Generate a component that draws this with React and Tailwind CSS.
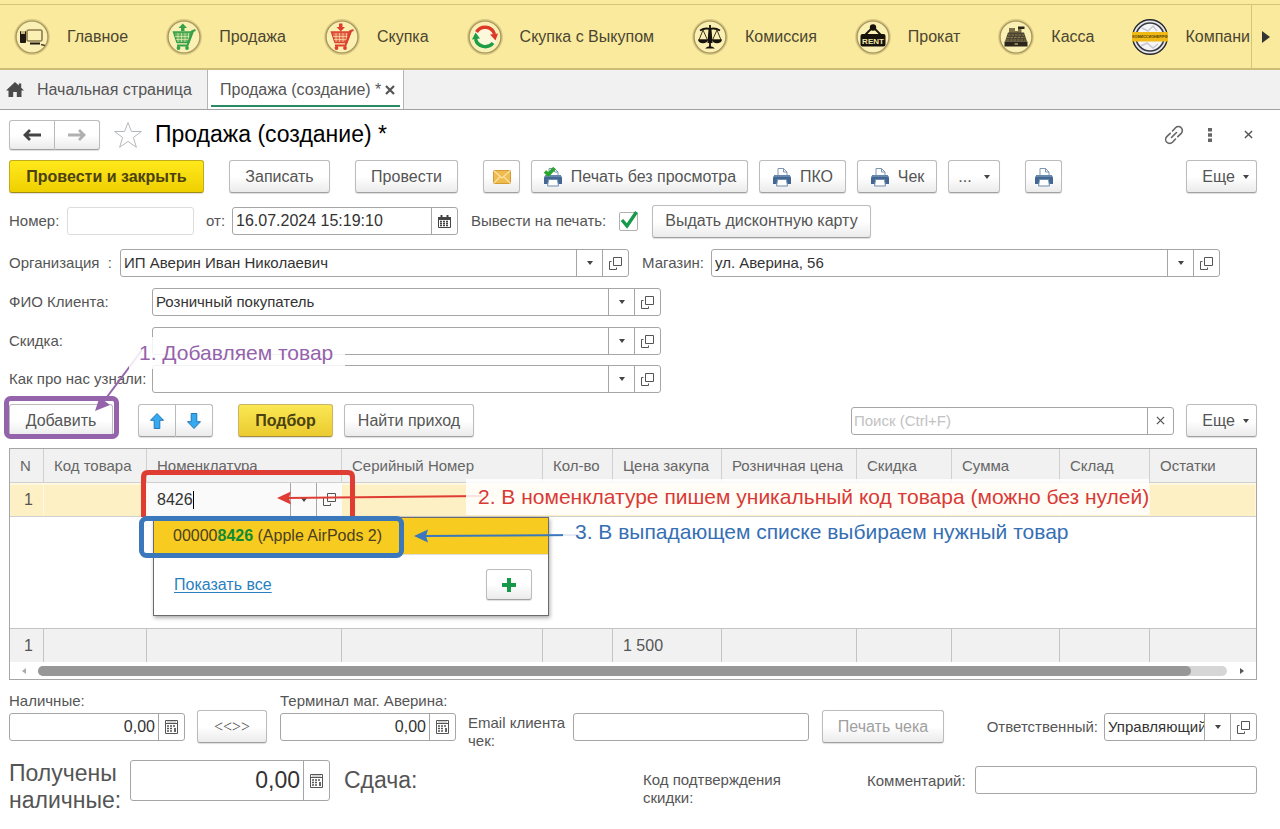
import React, { useState } from "react";

const Ring = ({ children }) => (
	<svg viewBox="0 0 36 36" className="w-9 h-9 shrink-0" aria-hidden="true">
		<circle cx="18" cy="18" r="16.6" fill="#fbf0b4" stroke="#d9cb86" strokeWidth="2.6" />
		<circle cx="18" cy="18" r="16" fill="none" stroke="#a8945a" strokeWidth="1.2" />
		{children}
	</svg>
);

const ComputerIcon = () => (
	<Ring>
		<rect x="6" y="12" width="6" height="12" rx="1" fill="#1f1a12" />
		<rect x="7" y="12" width="4" height="3" fill="#c9b678" />
		<rect x="13" y="11" width="15" height="11" rx="1.5" fill="#fbf0b4" stroke="#8b7c4d" strokeWidth="1.6" />
		<path d="M16 24.5h10" stroke="#1f1a12" strokeWidth="2" />
		<path d="M27 25.5l4 1" stroke="#4a4330" strokeWidth="1.8" />
	</Ring>
);

const CartIcon = ({ color, down }) => (
	<Ring>
		<path d="M7.5 13l3.500 10.500h12l4-10.500z" fill={color} fillOpacity=".75" stroke={color} strokeWidth="1.4" />
		<path d="M12 14v9M15.5 14v9M19 14v9M22.5 14v9M9 17.500h16M10 20.500h14" stroke="#fbf0b4" strokeWidth=".6" />
		<path d="M29.5 11l-3.500 1.200-4.500 14.300H11" fill="none" stroke={color} strokeWidth="2" />
		<circle cx="12.5" cy="29" r="1.900" fill={color} />
		<circle cx="21" cy="29" r="1.900" fill={color} />
		<path
			d={down ? "M15 4.500h3.500v3.500H21l-4.200 4.500-4.300-4.500H15z" : "M15 12h3.500V9H21l-4.200-4.500-4.300 4.500H15z"}
			fill={color}
		/>
	</Ring>
);

const CycleIcon = () => (
	<Ring>
		<circle cx="18" cy="18" r="12" fill="#fdf8dc" />
		<path d="M9.5 13A10 10 0 0 1 27.500 15" fill="none" stroke="#dd3a26" strokeWidth="3.400" />
		<path d="M23 15.500l8-1-2.500 7z" fill="#dd3a26" />
		<path d="M26 24A10 10 0 0 1 8.500 20" fill="none" stroke="#1f9d43" strokeWidth="3.400" />
		<path d="M5 20.500l3.500-7 4.500 6z" fill="#1f9d43" />
	</Ring>
);

const ScalesIcon = () => (
	<Ring>
		<path d="M18 6v22M8 11.500q5-3 10-1.500 5-1.500 10 1.500" fill="none" stroke="#16130c" strokeWidth="1.800" />
		<path d="M16.500 10h3l1 14h-5z" fill="#16130c" />
		<path d="M11 11l-4 10h8.500zM25 11l-4.500 10H29z" fill="none" stroke="#3d3521" strokeWidth="1" />
		<path d="M6 20.500h10a5 3.800 0 0 1-10 0zM20 20.500h10a5 3.800 0 0 1-10 0z" fill="#16130c" />
		<path d="M13 29.500q5-4.500 10 0z" fill="#16130c" />
	</Ring>
);

const RentIcon = () => (
	<Ring>
		<path d="M10 16l7-7h2l7 7" fill="none" stroke="#16130c" strokeWidth="1.800" />
		<circle cx="18" cy="8.500" r="3.200" fill="#16130c" />
		<rect x="5.500" y="15" width="25" height="12.500" rx="2" fill="#16130c" />
		<text x="18" y="24.500" textAnchor="middle" fontSize="8" fontWeight="700" fill="#f3e6a4" fontFamily="Liberation Sans, sans-serif">
			RENT
		</text>
	</Ring>
);

const RegisterIcon = () => (
	<Ring>
		<path d="M11 9h6v3h3V8h6v2h-2.500v4H11z" fill="#7d7149" />
		<path d="M20 7.500h6.500v2.500H20z" fill="#2b2619" />
		<path d="M10 13.500h16l3 9H7z" fill="#4c4430" />
		<path d="M10 16h16M9 18.500h18M8.500 21h19" stroke="#9c8e60" strokeWidth=".8" strokeDasharray="2.5 1" />
		<rect x="6.500" y="22.500" width="23" height="5" fill="#2b2619" />
		<rect x="16.500" y="24" width="3.500" height="2" fill="#8b7d54" />
	</Ring>
);

const CompanyLogo = () => (
	<svg viewBox="0 0 36 36" className="w-9 h-9 shrink-0" aria-hidden="true">
		<circle cx="18" cy="18" r="17.300" fill="#e7e7e8" stroke="#26262e" strokeWidth="1.400" />
		<circle cx="18" cy="18" r="14" fill="#f5f5f5" stroke="#3a3a46" strokeWidth="1.600" />
		<path d="M10 9l6 3 5-5 4 5M9 27l6-3 6 5 5-4" fill="none" stroke="#c7c9d2" strokeWidth="1.500" />
		<rect x="0" y="13" width="36" height="9.500" fill="#f0b916" />
		<text x="18" y="19.300" textAnchor="middle" fontSize="3.700" fontWeight="700" fill="#4a3a08" fontFamily="Liberation Sans, sans-serif">
			КОМИССИОНЕР.РФ
		</text>
	</svg>
);

const HomeIcon = () => (
	<svg viewBox="0 0 18 16" className="w-[18px] h-4" fill="#4a4a4a" aria-hidden="true">
		<path d="M9 0L0 8.500h2.500V15h4.700v-5h3.600v5h4.700V8.500H18l-2.800-2.700V1.500h-2.400v2z" />
	</svg>
);

const ArrowIcon = ({ color, flip }) => (
	<svg viewBox="0 0 18 12" className={flip ? "w-[18px] h-3 rotate-180" : "w-[18px] h-3"} aria-hidden="true">
		<path d="M7 1L2 6l5 5M3 6h15" fill="none" stroke={color} strokeWidth="2.800" />
	</svg>
);

const StarIcon = () => (
	<svg viewBox="0 0 30 28" className="w-[30px] h-7" aria-hidden="true">
		<path
			d="M15 1.500l3.400 9h10l-8 6 3 9.800-8.400-5.900-8.400 5.900 3-9.800-8-6h10z"
			fill="#fff"
			stroke="#b5b9bd"
			strokeWidth="1"
		/>
	</svg>
);

const LinkIcon = () => (
	<svg viewBox="0 0 20 20" className="w-5 h-5" fill="none" stroke="#666" strokeWidth="1.600" strokeLinecap="round" aria-hidden="true">
		<path d="M8.500 6l3-3.200a3.900 3.900 0 0 1 5.700 5.600l-3.400 3.200M11.500 14l-3 3.200a3.900 3.900 0 0 1-5.700-5.600l3.400-3.200M7.500 12.500l5-5" />
	</svg>
);

const CloseIcon = ({ className, width = 1.6 }) => (
	<svg viewBox="0 0 10 10" className={className} aria-hidden="true">
		<path d="M1 1l8 8M9 1L1 9" stroke="#555" strokeWidth={width} />
	</svg>
);

const Caret = () => (
	<svg viewBox="0 0 6 4" className="w-1.5 h-1" fill="#444" aria-hidden="true">
		<path d="M0 0h6L3 4z" />
	</svg>
);

const OpenIcon = () => (
	<svg viewBox="0 0 13 13" className="w-[13px] h-[13px]" fill="none" stroke="#555" strokeWidth="1" aria-hidden="true">
		<path d="M4.500 .5h8v8h-8zM2.500 4.500h-2v8h7v-2" />
	</svg>
);

const CalendarIcon = () => (
	<svg viewBox="0 0 13 13" className="w-[13px] h-[13px]" aria-hidden="true">
		<path d="M.5 2.500h12v10H.5z" fill="#fff" stroke="#444" />
		<path d="M0 2h13v3H0zM2.500 0h2v3h-2zM8.500 0h2v3h-2z" fill="#444" />
		<path d="M2 6.500h9M2 8.500h9M2 10.500h9" stroke="#444" strokeWidth="1.300" strokeDasharray="2 1" />
	</svg>
);

const CalculatorIcon = () => (
	<svg viewBox="0 0 13 14" className="w-[13px] h-3.5" aria-hidden="true">
		<path d="M.5 .5h12v13H.5z" fill="#fff" stroke="#555" />
		<path d="M1 3.500h11" stroke="#555" />
		<path d="M2 2h9" stroke="#aaa" />
		<path d="M2 6h9M2 8.500h6M2 11h6" stroke="#555" strokeWidth="1.500" strokeDasharray="2 1" />
		<path d="M10 8v4" stroke="#555" strokeWidth="1.800" />
	</svg>
);

const PrinterIcon = ({ checked }) => (
	<svg viewBox="0 0 20 20" className="w-5 h-5 shrink-0" aria-hidden="true">
		<path d="M6 9V1.500h5.500L15 5v4z" fill="#fff" stroke="#7e95b0" />
		<path d="M11.500 1.500V5H15" fill="none" stroke="#7e95b0" />
		<path d="M2.500 8h15l1.500 2.500V17H1v-6.500z" fill="#416792" />
		<path d="M2.500 8h15l1 2h-17z" fill="#6787ad" />
		<path d="M5.500 12.500h9l1 6.500h-11z" fill="#fff" stroke="#6e8bad" />
		{checked && <path d="M2 4.500l3.500 3L11.500 1" fill="none" stroke="#27a52c" strokeWidth="3.600" />}
	</svg>
);

const MailIcon = () => (
	<svg viewBox="0 0 18 14" className="w-[18px] h-3.5" aria-hidden="true">
		<rect x=".5" y=".5" width="17" height="13" rx="1" fill="#f0bc50" stroke="#d59c36" />
		<path d="M1 1l8 7 8-7M1 13l6-6M17 13l-6-6" fill="none" stroke="#fbe3a6" strokeWidth="1.200" />
	</svg>
);

const BlueArrow = ({ down }) => (
	<svg viewBox="0 0 16 18" className={down ? "w-4 h-[18px] rotate-180" : "w-4 h-[18px]"} aria-hidden="true">
		<path d="M8 1.500l6.500 6.800h-3.700V16.500H5.200V8.300H1.500z" fill="#35aaf0" stroke="#2277b4" />
	</svg>
);

const tones = {
	plain: "border-[#bcbcbc] border-b-[#a0a0a0] from-white from-50% to-[#ebebeb]",
	main: "border-[#c2ab18] border-b-[#a08c10] from-[#ffe91a] to-[#efd000] font-bold text-[#4b4210]",
	pick: "border-[#c9b56a] border-b-[#a39141] from-[#fae752] to-[#ebcb30] font-bold text-[#4b4210]",
};

const Btn = ({ tone = "plain", className = "", children, ...rest }) => (
	<button
		className={`flex shrink-0 items-center justify-center whitespace-nowrap rounded-[3px] border bg-linear-to-b text-base leading-[18px] shadow-[0_1px_1px_#00000022] ${tones[tone]} ${className}`}
		{...rest}
	>
		{children}
	</button>
);

const box = "flex rounded-[3px] border border-[#a6a6a6] bg-white text-[#333] overflow-hidden";
const sideBtn = "flex w-[26px] shrink-0 items-center justify-center border-l border-[#a6a6a6]";

// text field with drop-down and open buttons on the right side
const Combo = ({ id, value = "", className = "" }) => (
	<div className={`${box} h-7 ${className}`}>
		<input id={id} defaultValue={value} className="min-w-0 flex-1 pl-[3px] outline-none" />
		<button className={sideBtn} aria-label="Выбрать">
			<Caret />
		</button>
		<button className={sideBtn} aria-label="Открыть">
			<OpenIcon />
		</button>
	</div>
);

const MoneyField = ({ id, className }) => (
	<div className={`${box} ${className}`}>
		<input id={id} defaultValue="0,00" className="min-w-0 flex-1 pr-[3px] text-right outline-none" />
		<button className={sideBtn} aria-label="Калькулятор">
			<CalculatorIcon />
		</button>
	</div>
);

const sections = [
	{ title: "Главное", icon: <ComputerIcon /> },
	{ title: "Продажа", icon: <CartIcon color="#35a14a" /> },
	{ title: "Скупка", icon: <CartIcon color="#dc3f2e" down /> },
	{ title: "Скупка с Выкупом", icon: <CycleIcon /> },
	{ title: "Комиссия", icon: <ScalesIcon /> },
	{ title: "Прокат", icon: <RentIcon /> },
	{ title: "Касса", icon: <RegisterIcon /> },
	{ title: "Компани", icon: <CompanyLogo /> },
];

const columns = [
	{ title: "N", width: "w-[34px]" },
	{ title: "Код товара", width: "w-[103px]" },
	{ title: "Номенклатура", width: "w-[195px]" },
	{ title: "Серийный Номер", width: "w-[201px]" },
	{ title: "Кол-во", width: "w-[70px]" },
	{ title: "Цена закупа", width: "w-[109px]" },
	{ title: "Розничная цена", width: "w-[135px]" },
	{ title: "Скидка", width: "w-[95px]" },
	{ title: "Сумма", width: "w-[108px]" },
	{ title: "Склад", width: "w-[90px]" },
	{ title: "Остатки", width: "" },
];

const Sections = () => (
	<nav className="flex h-[70px] border-b-2 border-[#cdbd74] bg-[#faea9d] pt-1 text-base">
		<div className="flex min-w-0 flex-1 items-center gap-[38px] overflow-hidden border-t border-[#d3c47c] pl-[14px]">
			{sections.map((item) => (
				<a key={item.title} href="#" className="flex shrink-0 items-center gap-[17px] text-[#4b4632]">
					{item.icon}
					{item.title}
				</a>
			))}
		</div>
		<button aria-label="Дальше" className="flex w-[29px] shrink-0 items-center justify-center border-t border-l border-[#d3c47c]">
			<svg viewBox="0 0 8 12" className="w-2 h-3" fill="#333">
				<path d="M0 0l8 6-8 6z" />
			</svg>
		</button>
	</nav>
);

const Tabs = () => (
	<div className="flex h-10 border-b border-[#a0a0a0] bg-[#f1f1f1] text-base">
		<a href="#" className="flex w-[208px] items-center gap-[13px] border-r border-[#b5b5b5] pl-[6px]">
			<HomeIcon />
			Начальная страница
		</a>
		<div className="flex items-stretch border-r border-[#b5b5b5] bg-white px-[3px]">
			<div className="mb-[2px] flex items-center gap-1 border-b-2 border-[#2b8a61] pt-1 pr-[5px] pl-[9px]">
				<a href="#">Продажа (создание) *</a>
				<button aria-label="Закрыть вкладку">
					<CloseIcon className="w-2.5 h-2.5" width={2.2} />
				</button>
			</div>
		</div>
	</div>
);

const Suggestions = () => (
	<div className="absolute top-[34px] left-[6px] z-10 h-[99px] w-[396px] border border-[#6b6b6b] bg-white shadow-[1px_2px_4px_#00000055]">
		<button className="flex h-9 w-full items-center bg-[#f8cb20] pl-[19px] text-[#4a4020]">
			00000<b className="text-[#128a33]">8426</b>&nbsp;(Apple AirPods 2)
		</button>
		<div className="flex items-center justify-between border-t border-[#ddd] pt-[14px] pr-4 pl-5">
			<a href="#" className="text-[#2a7fc0] underline underline-offset-2">
				Показать все
			</a>
			<Btn className="h-[31px] w-[46px]" aria-label="Создать">
				<svg viewBox="0 0 14 14" className="w-3.5 h-3.5" fill="#17994a">
					<path d="M5 0h4v5h5v4H9v5H5V9H0V5h5z" />
				</svg>
			</Btn>
		</div>
	</div>
);

const GoodsTable = ({ code, setCode }) => (
	<div className="mt-[11px] border border-[#a6a6a6]">
		<table className="w-full table-fixed border-separate border-spacing-0">
			<thead>
				<tr className="h-[34px] bg-[#f1f1f1] text-left text-[#666]">
					{columns.map((col, index) => (
						<th
							key={col.title}
							className={`${col.width} whitespace-nowrap border-b border-[#d0d0d0] pl-[10px] font-normal ${index < 10 ? "border-r" : ""}`}
						>
							{col.title}
						</th>
					))}
				</tr>
			</thead>
			<tbody className="text-base leading-[18px]">
				<tr className="h-[34px]">
					{columns.map((col, index) =>
						index === 2 ? (
							<td key={col.title} className="relative border-b border-[#d0d0d0] bg-[#fafafa] p-0">
								<div className="flex h-[33px] items-stretch pl-[10px]">
									<div className="flex flex-1 items-center">
										<input
											aria-label="Номенклатура"
											value={code}
											onChange={(e) => setCode(e.target.value)}
											className="w-9 bg-transparent text-[#333] outline-none"
										/>
										<span className="h-[18px] w-px bg-black" />
									</div>
									<button className={sideBtn} aria-label="Выбрать">
										<Caret />
									</button>
									<button className={sideBtn} aria-label="Открыть">
										<OpenIcon />
									</button>
								</div>
								<Suggestions />
							</td>
						) : (
							<td key={col.title} className="border-b border-[#d0d0d0] bg-[#fdf0c4] pl-[14px] shadow-[inset_0_2px_0_#fff8e0,inset_-1px_0_0_#fff8e0]">
								{index === 0 && "1"}
							</td>
						)
					)}
				</tr>
				<tr className="h-[111px]">
					<td colSpan={11}></td>
				</tr>
			</tbody>
			<tfoot className="text-base leading-[18px]">
				<tr className="h-[34px] bg-[#f1f1f1]">
					{columns.map((col, index) => (
						<td
							key={col.title}
							className={`border-t border-[#c4c4c4] ${index < 10 ? "border-r" : ""} ${index === 0 ? "pl-[14px]" : "pl-[10px]"}`}
						>
							{index === 0 && "1"}
							{index === 5 && "1 500"}
						</td>
					))}
				</tr>
			</tfoot>
		</table>
		{/* horizontal scroll */}
		<div className="flex h-[17px] items-center justify-between pr-3 pl-3">
			<svg viewBox="0 0 4 6" className="w-1 h-1.5" fill="#aaa">
				<path d="M4 0v6L0 3z" />
			</svg>
			<div className="mr-[13px] ml-3 h-2.5 flex-1 rounded-full bg-[#d6d6d6]">
				<div className="h-full w-[97%] rounded-full bg-[#979797]"></div>
			</div>
			<svg viewBox="0 0 4 6" className="w-1 h-1.5" fill="#555">
				<path d="M0 0v6l4-3z" />
			</svg>
		</div>
	</div>
);

// tutorial marks over the form
const Hints = () => (
	<div className="pointer-events-none absolute inset-0 z-20 overflow-hidden text-[21px] leading-6">
		<svg width="1280" height="829" className="absolute top-0 left-0" fill="none">
			<rect x="6.500" y="398.500" width="110" height="38" rx="4" stroke="#9563ab" strokeWidth="5" />
			<path d="M142 350L104 401" stroke="#9563ab" strokeWidth="2" />
			<path d="M95 411l5-15 4 4.500 6 4.500z" fill="#9563ab" />
			<path d="M143.500 517V477q0-4.500 4.500-4.500h200q4.500 0 4.500 4.500v40" stroke="#df3d33" strokeWidth="5" />
			<path d="M286 498L482 496" stroke="#df3d33" strokeWidth="2" />
			<path d="M277 498l14-6.500-2 6.500 2 6.500z" fill="#df3d33" />
			<rect x="141.500" y="518.500" width="260" height="37" rx="5" stroke="#3b78bb" strokeWidth="5" />
			<path d="M424 536L580 535" stroke="#3b78bb" strokeWidth="2" />
			<path d="M414 536l14-6.500-2 6.500 2 6.500z" fill="#3b78bb" />
		</svg>
		<p className="absolute top-[337px] left-[129px] bg-white/85 py-1 pr-3 pl-2.5 text-[#9563ab]">1. Добавляем товар</p>
		<p className="absolute top-[479px] left-[466px] whitespace-nowrap bg-white/85 py-[6px] pl-3 text-[#d93a36]">
			2. В номенклатуре пишем уникальный код товара (можно без нулей)
		</p>
		<p className="absolute top-[520px] left-[563px] whitespace-nowrap bg-white/85 pl-3 text-[#366fb4]">
			3. В выпадающем списке выбираем нужный товар
		</p>
	</div>
);

export default function App() {
	const [code, setCode] = useState("8426");
	const [print, setPrint] = useState(true);

	return (
		<div className="relative min-h-screen bg-white font-['Liberation_Sans',Arial,sans-serif] text-[15px] leading-[18px] text-[#555]">
			<Sections />
			<Tabs />
			<main className="pt-[9px] pr-[23px] pb-4 pl-[9px]">
				{/* title */}
				<div className="flex h-[31px] items-center">
					<div className="flex">
						<Btn className="h-[30px] w-[46px] rounded-r-none" aria-label="Назад">
							<ArrowIcon color="#444" />
						</Btn>
						<Btn className="h-[30px] w-[45px] rounded-l-none border-l-0" aria-label="Вперед">
							<ArrowIcon color="#b0b0b0" flip />
						</Btn>
					</div>
					<button className="ml-[13px]" aria-label="В избранное">
						<StarIcon />
					</button>
					<h1 className="ml-3 text-[23px] leading-[27px] text-black">Продажа (создание) *</h1>
					<div className="ml-auto flex items-center">
						<button aria-label="Ссылка">
							<LinkIcon />
						</button>
						<button className="ml-6" aria-label="Меню">
							<svg viewBox="0 0 4 14" className="w-1 h-3.5" fill="#666">
								<path d="M0 0h4v3.500H0zM0 5.300h4v3.500H0zM0 10.500h4V14H0z" />
							</svg>
						</button>
						<button className="mr-1 ml-8" aria-label="Закрыть">
							<CloseIcon className="w-[9px] h-[9px]" />
						</button>
					</div>
				</div>

				{/* commands */}
				<div className="mt-[10px] flex gap-[11px]">
					<Btn tone="main" className="mr-[14px] h-[33px] w-[195px]">
						Провести и закрыть
					</Btn>
					<Btn className="mr-[14px] h-[33px] w-[101px]">Записать</Btn>
					<Btn className="mr-[14px] h-[33px] w-[103px]">Провести</Btn>
					<Btn className="h-[33px] w-[37px]" aria-label="Письмо">
						<MailIcon />
					</Btn>
					<Btn className="h-[33px] w-[217px] gap-2">
						<PrinterIcon checked />
						Печать без просмотра
					</Btn>
					<Btn className="h-[33px] w-[87px] gap-2">
						<PrinterIcon />
						ПКО
					</Btn>
					<Btn className="h-[33px] w-[80px] gap-2">
						<PrinterIcon />
						Чек
					</Btn>
					<Btn className="mr-[14px] h-[33px] w-[52px] gap-3">
						... <Caret />
					</Btn>
					<Btn className="h-[33px] w-[37px]" aria-label="Печать">
						<PrinterIcon />
					</Btn>
					<Btn className="ml-auto h-[33px] w-[71px] gap-2 pl-2">
						Еще <Caret />
					</Btn>
				</div>

				{/* number and date */}
				<div className="mt-[11px] flex h-[34px] items-center">
					<label htmlFor="number" className="w-[58px]">
						Номер:
					</label>
					<input id="number" className="h-7 w-[127px] rounded-[3px] border border-[#dcdcdc] px-1" />
					<label htmlFor="date" className="ml-3 w-[26px]">
						от:
					</label>
					<div className={`${box} h-7 w-[226px] text-base`}>
						<input id="date" defaultValue="16.07.2024 15:19:10" className="min-w-0 flex-1 pl-[3px] outline-none" />
						<button className={sideBtn} aria-label="Календарь">
							<CalendarIcon />
						</button>
					</div>
					<label htmlFor="print" className="ml-[13px] w-[148px] whitespace-nowrap">
						Вывести на печать:
					</label>
					<span className="relative h-[19px] w-[19px]">
						<input
							id="print"
							type="checkbox"
							checked={print}
							onChange={() => setPrint(!print)}
							className="block h-[19px] w-[19px] appearance-none rounded-[2px] border border-[#b0b0b0]"
						/>
						{print && (
							<svg viewBox="0 0 19 20" className="pointer-events-none absolute bottom-px left-0 h-5 w-[19px]">
								<path d="M3 10l5 6L17.500 2" fill="none" stroke="#16994a" strokeWidth="3.400" />
							</svg>
						)}
					</span>
					<Btn className="ml-[14px] h-[33px] w-[219px]">Выдать дисконтную карту</Btn>
				</div>

				{/* organization */}
				<div className="mt-[11px] flex items-center">
					<label htmlFor="org" className="w-[111px] whitespace-pre">
						Организация&nbsp; :
					</label>
					<Combo id="org" value="ИП Аверин Иван Николаевич" className="w-[509px]" />
					<label htmlFor="shop" className="ml-[13px] w-[69px]">
						Магазин:
					</label>
					<Combo id="shop" value="ул. Аверина, 56" className="w-[509px]" />
				</div>
				<div className="mt-[11px] flex items-center">
					<label htmlFor="client" className="w-[143px]">
						ФИО Клиента:
					</label>
					<Combo id="client" value="Розничный покупатель" className="w-[509px]" />
				</div>
				<div className="mt-[11px] flex items-center">
					<label htmlFor="discount" className="w-[143px]">
						Скидка:
					</label>
					<Combo id="discount" className="w-[509px]" />
				</div>
				<div className="mt-[10px] flex items-center">
					<label htmlFor="source" className="w-[143px] whitespace-nowrap">
						Как про нас узнали:
					</label>
					<Combo id="source" className="w-[509px]" />
				</div>

				{/* goods commands */}
				<div className="mt-[11px] flex items-center">
					<Btn className="h-[33px] w-[104px]">Добавить</Btn>
					<Btn className="ml-[25px] h-[33px] w-[38px] rounded-r-none" aria-label="Вверх">
						<BlueArrow />
					</Btn>
					<Btn className="h-[33px] w-[37px] rounded-l-none border-l-0" aria-label="Вниз">
						<BlueArrow down />
					</Btn>
					<Btn tone="pick" className="ml-[25px] h-[33px] w-[95px]">
						Подбор
					</Btn>
					<Btn className="ml-[11px] h-[33px] w-[130px]">Найти приход</Btn>
					<div className={`${box} ml-auto h-7 w-[323px]`}>
						<input
							aria-label="Поиск"
							placeholder="Поиск (Ctrl+F)"
							className="min-w-0 flex-1 pl-[2px] outline-none placeholder:text-[#c2c2c2]"
						/>
						<button className={sideBtn} aria-label="Очистить">
							<CloseIcon className="w-[9px] h-[9px]" width={1.4} />
						</button>
					</div>
					<Btn className="ml-3 h-[33px] w-[71px] gap-2 pl-2">
						Еще <Caret />
					</Btn>
				</div>

				<GoodsTable code={code} setCode={setCode} />

				{/* payment */}
				<div className="mt-[12px] flex items-end">
					<div className="w-[176px]">
						<label htmlFor="cash" className="mb-[3px] block">
							Наличные:
						</label>
						<MoneyField id="cash" className="h-7 w-full text-base" />
					</div>
					<Btn className="-mb-[2px] ml-3 h-[33px] w-[70px] font-['Liberation_Serif',serif]">&lt;&lt;&gt;&gt;</Btn>
					<div className="ml-[13px] w-[176px]">
						<label htmlFor="terminal" className="mb-[3px] block whitespace-nowrap">
							Терминал маг. Аверина:
						</label>
						<MoneyField id="terminal" className="h-7 w-full text-base" />
					</div>
					<label htmlFor="email" className="-mb-[9px] ml-[12px] w-[105px]">
						Email клиента чек:
					</label>
					<input id="email" className="h-7 w-[236px] rounded-[3px] border border-[#a6a6a6] px-1" />
					<Btn className="-mb-[2px] ml-[13px] h-[33px] w-[122px] text-[#a0a0a0]">Печать чека</Btn>
					<label htmlFor="manager" className="mb-[5px] ml-auto pr-[6px]">
						Ответственный:
					</label>
					<Combo id="manager" value="Управляющий" className="w-[153px]" />
				</div>

				{/* change */}
				<div className="mt-[19px] flex items-start">
					<label htmlFor="received" className="w-[121px] text-[23px] leading-[27px]">
						Получены наличные:
					</label>
					<MoneyField id="received" className="h-[41px] w-[200px] text-[23px]" />
					<span className="mt-[7px] ml-[14px] text-[23px] leading-[27px]">Сдача:</span>
					<span className="mt-[11px] ml-auto w-[150px]">Код подтверждения скидки:</span>
					<label htmlFor="comment" className="mt-[12px] ml-[74px] w-[108px]">
						Комментарий:
					</label>
					<input id="comment" className="mt-[6px] h-7 w-[282px] rounded-[3px] border border-[#a6a6a6] px-1" />
				</div>
			</main>
			<Hints />
		</div>
	);
}
